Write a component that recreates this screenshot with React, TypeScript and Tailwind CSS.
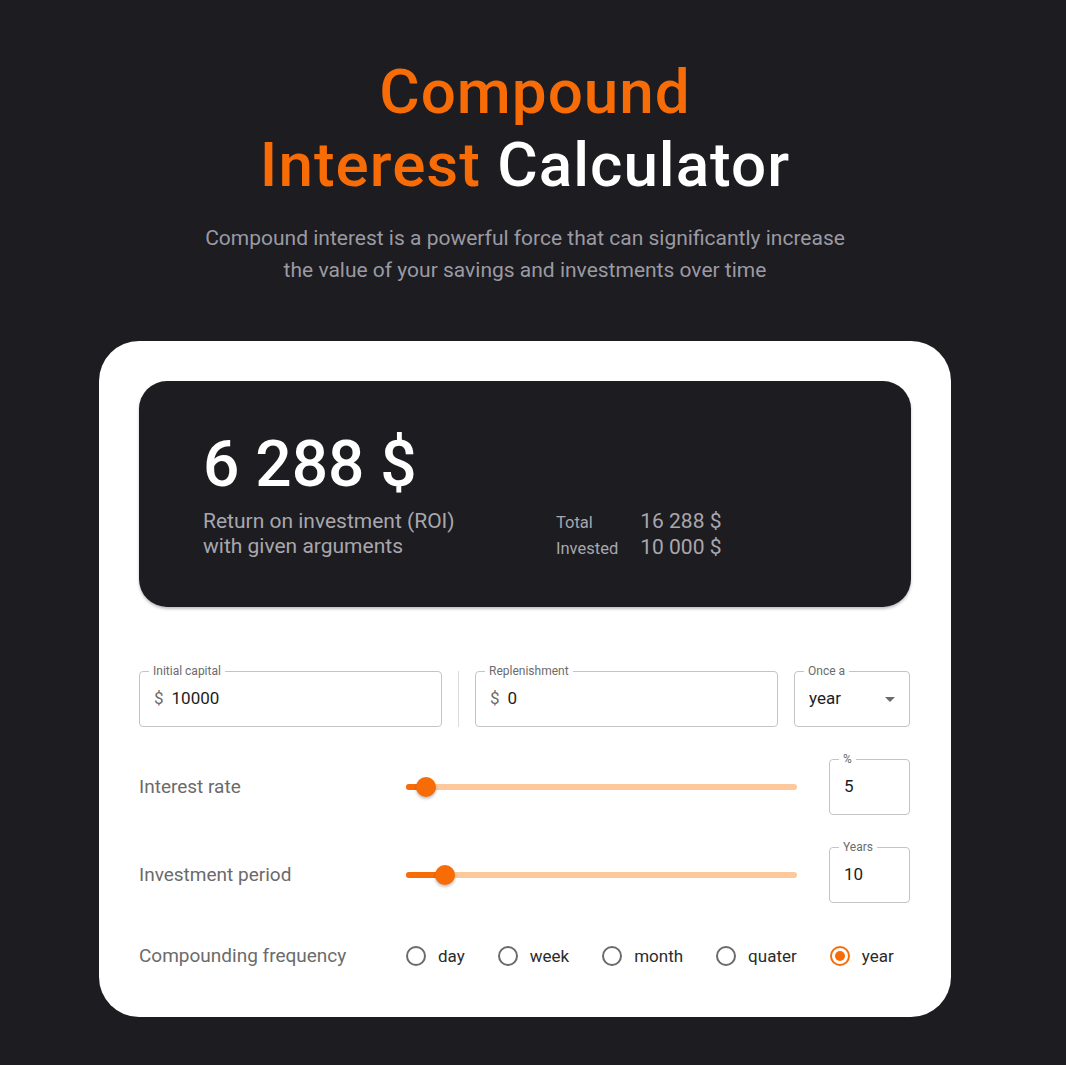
import { useState } from "react"

const font = { fontFamily: "Roboto, 'Liberation Sans', sans-serif" }

function Field({ label, prefix, value, className }: { label: string; prefix?: string; value: string; className?: string }) {
  return (
    <div className={"relative h-[56px] rounded border border-[#c4c4c4] flex items-center px-[14px] " + (className ?? "")}>
      <span className="absolute -top-[8px] left-[9px] bg-white px-[4px] text-[12px] leading-[14px] text-[#6b6b6b]">{label}</span>
      {prefix && <span className="text-[17px] text-[#6b6b6b] mr-[8px]">{prefix}</span>}
      <span className="text-[17px] text-[#1d1c21]">{value}</span>
    </div>
  )
}

function Slider({ pct }: { pct: number }) {
  return (
    <div className="relative flex-1 h-[20px] flex items-center">
      <div className="w-full h-[6px] rounded-full bg-[#fcc89c]" />
      <div className="absolute left-0 h-[6px] rounded-full bg-[#f76c06]" style={{ width: pct + "%" }} />
      <div
        className="absolute w-[20px] h-[20px] rounded-full bg-[#f76c06] shadow-[0_2px_3px_rgba(0,0,0,0.25)]"
        style={{ left: `calc(${pct}% - 10px)` }}
      />
    </div>
  )
}

function Radio({ label, checked, onClick }: { label: string; checked?: boolean; onClick: () => void }) {
  return (
    <button onClick={onClick} className="flex items-center gap-[12px] cursor-pointer">
      <span
        className={
          "w-[20px] h-[20px] rounded-full border-2 flex items-center justify-center " +
          (checked ? "border-[#f76c06]" : "border-[#6b6b6b]")
        }
      >
        {checked && <span className="w-[10px] h-[10px] rounded-full bg-[#f76c06]" />}
      </span>
      <span className="text-[17px] text-[#2b2b2b]">{label}</span>
    </button>
  )
}

export default function App() {
  const [freq, setFreq] = useState("year")

  return (
    <div style={font} className="min-h-screen w-full bg-[#1d1c21] flex flex-col items-center pt-[55px] pb-[48px] pr-[16px]">
      <h1 className="text-center text-[62px] leading-[73px] tracking-[1px] font-medium">
        <span className="inline-block pl-[20px] text-[#f76c06]">Compound</span>
        <br />
        <span className="text-[#f76c06]">Interest</span> <span className="text-white">Calculator</span>
      </h1>
      <p className="mt-[21px] text-center text-[21px] leading-[32px] text-[#9b9aa1] w-[660px]">
        Compound interest is a powerful force that can significantly increase the value of your savings and investments over time
      </p>

      <div className="mt-[55px] w-[852px] bg-white rounded-[40px] px-[40px] pt-[40px] pb-[46px]">
        <div className="h-[226px] rounded-[28px] bg-[#1d1c21] shadow-[0_2px_3px_rgba(0,0,0,0.25)] px-[64px] pt-[49px]">
          <div className="text-[64px] leading-[70px] font-medium text-white">6 288 $</div>
          <div className="mt-[9px] flex items-start">
            <div className="w-[353px] text-[21px] leading-[25px] text-[#a8a7ad]">
              Return on investment (ROI)
              <br />
              with given arguments
            </div>
            <div className="grid grid-cols-[auto_auto] gap-x-[22px] items-baseline">
              <span className="text-[16.5px] leading-[25px] text-[#a8a7ad]">Total</span>
              <span className="text-[21px] leading-[25px] text-[#a8a7ad]">16 288 $</span>
              <span className="text-[16.5px] leading-[25px] text-[#a8a7ad]">Invested</span>
              <span className="text-[21px] leading-[25px] text-[#a8a7ad]">10 000 $</span>
            </div>
          </div>
        </div>

        <div className="mt-[64px] flex items-center">
          <Field label="Initial capital" prefix="$" value="10000" className="w-[303px]" />
          <div className="mx-[16px] w-px h-[56px] bg-[#dcdcdc]" />
          <Field label="Replenishment" prefix="$" value="0" className="w-[303px]" />
          <div className="ml-[16px] relative h-[56px] w-[116px] rounded border border-[#c4c4c4] flex items-center justify-between px-[14px]">
            <span className="absolute -top-[8px] left-[9px] bg-white px-[4px] text-[12px] leading-[14px] text-[#6b6b6b]">Once a</span>
            <span className="text-[17px] text-[#1d1c21]">year</span>
            <svg width="10" height="5" viewBox="0 0 10 5">
              <path d="M0 0 L10 0 L5 5 Z" fill="#6b6b6b" />
            </svg>
          </div>
        </div>

        <div className="mt-[32px] flex items-center">
          <div className="w-[267px] text-[19px] text-[#6b6b6b]">Interest rate</div>
          <Slider pct={5} />
          <Field label="%" value="5" className="ml-[32px] mr-[1px] w-[81px]" />
        </div>

        <div className="mt-[32px] flex items-center">
          <div className="w-[267px] text-[19px] text-[#6b6b6b]">Investment period</div>
          <Slider pct={10} />
          <Field label="Years" value="10" className="ml-[32px] mr-[1px] w-[81px]" />
        </div>

        <div className="mt-[39px] flex items-center">
          <div className="w-[267px] text-[19px] text-[#6b6b6b]">Compounding frequency</div>
          <div className="flex items-center gap-[33px]">
            {["day", "week", "month", "quater", "year"].map((f) => (
              <Radio key={f} label={f} checked={freq === f} onClick={() => setFreq(f)} />
            ))}
          </div>
        </div>
      </div>
    </div>
  )
}
